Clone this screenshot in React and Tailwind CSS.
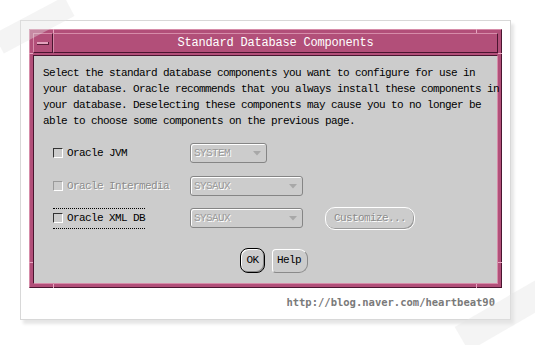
import React from 'react';

const mono = { fontFamily: '"Liberation Mono", "DejaVu Sans Mono", monospace' };

const Checkbox = ({ disabled }) => (
    <span
        className={`inline-block w-[10px] h-[10px] border ${
            disabled ? 'border-t-[#9a9a9a] border-l-[#9a9a9a]' : 'border-t-[#333] border-l-[#333]'
        } border-r-white border-b-white`}
    />
);

const Combo = ({ value, width }) => (
    <div
        className={`${width} h-[20px] flex items-center justify-between rounded-[3px] border border-[#858585] shadow-[inset_1px_1px_0_#ffffff] pl-[3px] pr-[5px]`}
    >
        <span className="text-[#9a9a9a] [text-shadow:1px_1px_0_#ffffff]">{value}</span>
        <svg width="8" height="5" viewBox="0 0 8 5">
            <path d="M0 0 H8 L4 4.5 Z" fill="#a8a8a8" />
        </svg>
    </div>
);

const Notch = ({ className }) => <span className={`absolute bg-[#e6a6c0] ${className}`} />;

export default function App() {
    return (
        <div className="w-[535px] h-[345px] bg-white relative overflow-hidden pl-[20px] pt-[20px]" style={mono}>
            {/* photo frame */}
            <div className="w-[491px] h-[300px] bg-white border border-[#d8d8d8] shadow-[3px_4px_3px_rgba(0,0,0,0.10)] pl-[8px] pt-[8px] flex flex-col">
                {/* dialog */}
                <div className="relative w-[473px] h-[259px] bg-[#b24f79] border border-t-[#d68ca9] border-l-[#d68ca9] border-r-[#4a1530] border-b-[#4a1530] p-[3px] flex flex-col">
                    <Notch className="left-[23px] top-[-1px] w-[1px] h-[4px]" />
                    <Notch className="left-[446px] top-[-1px] w-[1px] h-[4px]" />
                    <Notch className="left-[23px] bottom-[-1px] w-[1px] h-[4px]" />
                    <Notch className="left-[446px] bottom-[-1px] w-[1px] h-[4px]" />
                    <Notch className="left-[-1px] top-[23px] w-[4px] h-[1px]" />
                    <Notch className="right-[-1px] top-[23px] w-[4px] h-[1px]" />
                    <Notch className="left-[-1px] top-[232px] w-[4px] h-[1px]" />
                    <Notch className="right-[-1px] top-[232px] w-[4px] h-[1px]" />

                    {/* title bar */}
                    <div className="h-[20px] flex">
                        <div className="w-[20px] h-full border border-t-[#d68ca9] border-l-[#d68ca9] border-r-[#4a1530] border-b-[#4a1530] flex items-center justify-center">
                            <span className="w-[12px] h-[3px] bg-[#e2a3bd] border-b border-r border-[#5a1f3a]" />
                        </div>
                        <div className="flex-1 h-full border border-t-[#d68ca9] border-l-[#d68ca9] border-r-[#4a1530] border-b-[#4a1530] flex items-center justify-center text-white text-[12px] tracking-[-0.2px] leading-none">
                            Standard Database Components
                        </div>
                    </div>

                    {/* body */}
                    <div className="mt-[2px] flex-1 bg-[#cccccc] border border-t-[#4a1530] border-l-[#4a1530] border-r-[#d68ca9] border-b-[#d68ca9] pl-[9px] pt-[9px] text-[11px] tracking-[-0.6px] text-black">
                        <p className="leading-[16px] whitespace-pre">
                            {'Select the standard database components you want to configure for use in\nyour database. Oracle recommends that you always install these components in\nyour database. Deselecting these components may cause you to no longer be\nable to choose some components on the previous page.'}
                        </p>

                        <div className="mt-[14px] h-[20px] flex items-center">
                            <div className="w-[147px] pl-[10px] flex items-center gap-[4px]">
                                <Checkbox />
                                <span>Oracle JVM</span>
                            </div>
                            <Combo value="SYSTEM" width="w-[77px]" />
                        </div>

                        <div className="mt-[13px] h-[20px] flex items-center">
                            <div className="w-[147px] pl-[10px] flex items-center gap-[4px]">
                                <Checkbox disabled />
                                <span className="text-[#8c8c8c] [text-shadow:1px_1px_0_#ffffff]">Oracle Intermedia</span>
                            </div>
                            <Combo value="SYSAUX" width="w-[113px]" />
                        </div>

                        <div className="mt-[12px] h-[20px] flex items-center">
                            <div className="w-[147px] pl-[10px] flex items-center">
                                <div className="w-[92px] h-[21px] border-t border-b border-dotted border-black flex items-center gap-[4px]">
                                    <Checkbox />
                                    <span>Oracle XML DB</span>
                                </div>
                            </div>
                            <Combo value="SYSAUX" width="w-[113px]" />
                            <div className="ml-[22px] w-[90px] h-[23px] rounded-[10px] border border-white shadow-[inset_-1px_-1px_0_#9a9a9a] flex items-center pl-[8px] text-[#8c8c8c] [text-shadow:1px_1px_0_#ffffff]">
                                Customize...
                            </div>
                        </div>

                        <div className="mt-[20px] pl-[197px] flex items-center gap-[7px]">
                            <div className="w-[25px] h-[25px] rounded-[8px] border border-black shadow-[inset_1px_1px_0_#ffffff,inset_-1px_-1px_0_#8a8a8a] flex items-center justify-center">
                                OK
                            </div>
                            <div className="w-[36px] h-[24px] rounded-l-[4px] rounded-r-[9px] border border-t-white border-l-white border-r-[#8a8a8a] border-b-[#8a8a8a] flex items-center pl-[4px]">
                                Help
                            </div>
                        </div>
                    </div>
                </div>

                <div className="mt-[8px] pr-[15px] text-right text-[10.5px] font-bold text-[#7a7a7a] leading-[12px]" style={{ fontFamily: '"DejaVu Sans Mono", monospace' }}>
                    http://blog.naver.com/heartbeat90
                </div>
            </div>

            {/* tapes */}
            <div className="absolute left-[-6px] top-[14px] w-[80px] h-[22px] bg-[#e4e4e4]/40 -rotate-[28deg]" />
            <div className="absolute left-[455px] top-[300px] w-[100px] h-[28px] bg-[#e4e4e4]/40 -rotate-[30deg]" />
        </div>
    );
}
